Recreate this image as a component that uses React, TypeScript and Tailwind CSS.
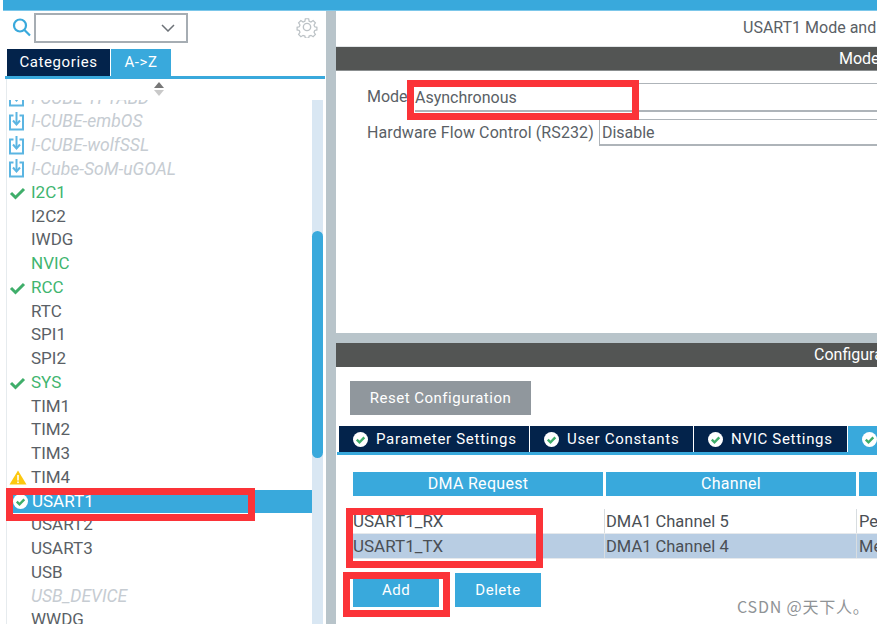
import React from "react";

const DL = () => (
  <svg width="18" height="21" viewBox="0 0 18 21" fill="none" stroke="#5bb5e2" strokeWidth="2" className="ml-[1px] shrink-0">
    <path d="M5.5 4.5H2v14h13v-14h-3.500" />
    <path d="M8.500 1v11" />
    <path d="M5 9.500l3.500 4 3.500-4" />
  </svg>
);
const Check = () => (
  <svg width="17" height="14" viewBox="0 0 17 14" fill="none" stroke="#3fae6a" strokeWidth="3" className="ml-[2px] shrink-0">
    <path d="M2 7l4.500 4.500L15 3" />
  </svg>
);
const Warn = () => (
  <svg width="18" height="15" viewBox="0 0 18 15" className="ml-[2px] shrink-0">
    <path d="M9 0.500L17.500 14.500H0.500Z" fill="#fcc80f" />
    <rect x="8.200" y="5" width="1.600" height="5.500" fill="#fff" />
    <rect x="8.200" y="11.500" width="1.600" height="1.600" fill="#fff" />
  </svg>
);
const OkBadge = () => (
  <svg width="15" height="15" viewBox="0 0 15 15" className="shrink-0">
    <circle cx="7.500" cy="7.500" r="7.500" fill="#fff" />
    <path d="M3.800 7.600l2.700 2.700 4.800-5" fill="none" stroke="#3fae6a" strokeWidth="2.400" />
  </svg>
);
const Gear = () => (
  <svg width="22" height="22" viewBox="0 0 24 24" fill="none" stroke="#bcc2c6" strokeWidth="1.500">
    <path d="M10 2h4l.6 3 2.200.9 2.600-1.700 2.800 2.800-1.700 2.600.9 2.200 2.600.6v3.200l-2.600.6-.9 2.200 1.700 2.600-2.800 2.800-2.600-1.700-2.200.9-.6 2.600h-4l-.6-2.600-2.200-.9-2.600 1.700-2.800-2.800 1.700-2.600-.9-2.200-2.600-.6v-3.200l2.600-.6.900-2.200-1.700-2.600 2.800-2.800 2.600 1.700 2.200-.9z" transform="translate(1.200 1.200) scale(0.9)" />
    <circle cx="12" cy="12" r="4" />
  </svg>
);

type Row = { t: string; k: "dl" | "ok" | "plain" | "green" | "warn" | "dis" | "sel" };
const rows: Row[] = [
  { t: "I-CUBE-TFTABD", k: "dl" },
  { t: "I-CUBE-embOS", k: "dl" },
  { t: "I-CUBE-wolfSSL", k: "dl" },
  { t: "I-Cube-SoM-uGOAL", k: "dl" },
  { t: "I2C1", k: "ok" },
  { t: "I2C2", k: "plain" },
  { t: "IWDG", k: "plain" },
  { t: "NVIC", k: "green" },
  { t: "RCC", k: "ok" },
  { t: "RTC", k: "plain" },
  { t: "SPI1", k: "plain" },
  { t: "SPI2", k: "plain" },
  { t: "SYS", k: "ok" },
  { t: "TIM1", k: "plain" },
  { t: "TIM2", k: "plain" },
  { t: "TIM3", k: "plain" },
  { t: "TIM4", k: "warn" },
  { t: "USART1", k: "sel" },
  { t: "USART2", k: "plain" },
  { t: "USART3", k: "plain" },
  { t: "USB", k: "plain" },
  { t: "USB_DEVICE", k: "dis" },
  { t: "WWDG", k: "plain" },
];

function ListRow({ r }: { r: Row }) {
  const italic = r.k === "dl" || r.k === "dis";
  const color =
    r.k === "sel" ? "text-white bg-[#39a9dc]" :
    r.k === "ok" || r.k === "green" ? "text-[#3fb56f]" :
    italic ? "text-[#c6ccd2] italic" : "text-[#5a5f66]";
  return (
    <div className={`h-[23.75px] shrink-0 flex items-center relative whitespace-nowrap ${italic ? "text-[17.5px]" : "text-[17px]"} ${color}`}>
      <div className="w-[24px] shrink-0 flex items-center">
        {r.k === "dl" && <DL />}
        {r.k === "ok" && <Check />}
        {r.k === "warn" && <Warn />}
        {r.k === "sel" && <span className="ml-[6px]"><OkBadge /></span>}
      </div>
      <span className={r.k === "sel" ? "ml-px" : ""}>{r.t}</span>
    </div>
  );
}

function Tab({ label, w }: { label: string; w: string }) {
  return (
    <div className={`${w} h-[26px] bg-[#03234b] text-white text-[15px] tracking-[0.7px] flex items-center pl-[14px] gap-[8px] shrink-0`}>
      <OkBadge />
      <span>{label}</span>
    </div>
  );
}

function RedBox({ cls }: { cls: string }) {
  return <div className={`absolute border-[7px] border-[#fb3338] ${cls}`} />;
}

export default function App() {
  return (
    <div className="relative w-[877px] h-[624px] overflow-hidden bg-white flex flex-col font-['Roboto',sans-serif] text-[#5a5f66]">
      <div className="h-[11px] shrink-0 ml-[3px] bg-[#39a9dc] border-b border-[#7cc7ea]" />
      <div className="flex-1 flex min-h-0">
        {/* left */}
        <div className="w-[326px] shrink-0 flex flex-col pl-[5px]">
          <div className="h-[38px] shrink-0 flex items-start pt-[2px]">
            <svg width="20" height="22" viewBox="0 0 20 22" fill="none" stroke="#39a9dc" strokeWidth="2.200" className="ml-[7px] mt-[4px] shrink-0">
              <circle cx="8" cy="8.500" r="6" />
              <path d="M12.500 13l5.500 5.500" />
            </svg>
            <div className="ml-[2px] w-[154px] h-[30px] border-2 border-[#a6adb3] flex items-center justify-end pr-[11px]">
              <svg width="14" height="8" viewBox="0 0 14 8" fill="none" stroke="#6d7278" strokeWidth="1.500"><path d="M1 1l6 6 6-6" /></svg>
            </div>
            <div className="ml-auto mr-[8px] mt-[3px]"><Gear /></div>
          </div>
          <div className="flex shrink-0 pl-[2px] h-[27px] gap-px">
            <div className="w-[103px] bg-[#03234b] text-white text-[15px] tracking-[0.6px] flex items-center justify-center">Categories</div>
            <div className="w-[60px] bg-[#39a9dc] text-white text-[15px] tracking-[0.6px] flex items-center justify-center">A-&gt;Z</div>
          </div>
          <div className="h-[3px] shrink-0 bg-[#39a9dc] mr-[1px]" />
          <div className="flex-1 min-h-0 relative border-l border-[#e6ebee] ml-[1px] mr-[3px] flex flex-col">
            <div className="h-[21px] shrink-0 relative">
              <svg width="12" height="14" viewBox="0 0 12 14" className="absolute left-[146px] top-[3px]">
                <path d="M6 0l5 6H1z" fill="#777" />
                <path d="M6 14l5-6H1z" fill="#c9c9c9" />
              </svg>
            </div>
            <div className="flex-1 min-h-0 flex">
              <div className="flex-1 min-w-0 flex flex-col overflow-hidden">
                <div className="-mt-[14.200px] flex flex-col">
                  {rows.map((r) => <ListRow key={r.t} r={r} />)}
                </div>
              </div>
              <div className="w-[11px] shrink-0 bg-[#d9e7f3] flex flex-col">
                <div className="h-[131px] shrink-0" />
                <div className="h-[227px] shrink-0 rounded-[6px] bg-[#39a9dc]" />
              </div>
            </div>
          </div>
        </div>
        {/* gutter */}
        <div className="w-[10px] shrink-0 bg-[#b8c4ca]" />
        {/* right */}
        <div className="flex-1 min-w-0 flex flex-col overflow-hidden">
          <div className="h-[36px] shrink-0 border-b border-[#e2e6e8] whitespace-nowrap text-[16px] pl-[407px] pt-[5px]">USART1 Mode and Configuration</div>
          <div className="h-[24px] shrink-0 bg-[#535554] border-b border-[#8b8f90] text-white text-[16px] whitespace-nowrap pl-[503px] flex items-center">Mode</div>
          <div className="h-[262px] shrink-0 flex flex-col pt-[12px] pl-[31px] text-[16px]">
            <div className="h-[29px] flex shrink-0">
              <span className="leading-[28px] w-[48px] shrink-0">Mode</span>
              <div className="w-[600px] shrink-0 border-t border-b-2 border-[#aeb4b9] leading-[27px]">Asynchronous</div>
            </div>
            <div className="h-[27px] mt-[7px] flex shrink-0">
              <span className="leading-[27px] whitespace-nowrap tracking-[0.1px]">Hardware Flow Control (RS232)</span>
              <div className="ml-[5px] w-[400px] shrink-0 border border-b-2 border-[#aeb4b9] leading-[25px] pl-[2px]">Disable</div>
            </div>
          </div>
          <div className="h-[10px] shrink-0 bg-[#b8c4ca]" />
          <div className="h-[24px] shrink-0 bg-[#535554] text-white text-[16px] whitespace-nowrap pl-[478px] flex items-center">Configuration</div>
          <div className="flex-1 min-h-0 flex flex-col">
            <div className="mt-[14px] ml-[14px] w-[181px] h-[34px] shrink-0 bg-[#90979d] text-white text-[15px] tracking-[0.5px] flex items-center justify-center">Reset Configuration</div>
            <div className="mt-[11px] ml-[3px] flex gap-px shrink-0 whitespace-nowrap">
              <Tab label="Parameter Settings" w="w-[190px]" />
              <Tab label="User Constants" w="w-[163px]" />
              <Tab label="NVIC Settings" w="w-[153px]" />
              <div className="w-[60px] h-[26px] bg-[#39a9dc] pl-[14px] flex items-center shrink-0"><OkBadge /></div>
            </div>
            <div className="ml-[1px] h-[3px] shrink-0 bg-[#39a9dc]" />
            <div className="mt-[17px] ml-[17px] flex gap-[3px] shrink-0 text-white text-[16px] whitespace-nowrap tracking-[0.3px]">
              <div className="w-[250px] shrink-0 h-[24px] bg-[#39a9dc] flex items-center justify-center">DMA Request</div>
              <div className="w-[250px] shrink-0 h-[24px] bg-[#39a9dc] flex items-center justify-center">Channel</div>
              <div className="w-[100px] shrink-0 h-[24px] bg-[#39a9dc]" />
            </div>
            <div className="mt-[13px] ml-[17px] flex h-[25px] shrink-0 leading-[25px] text-[#4a4f55] whitespace-nowrap border-b border-[#e6e9ec]">
              <div className="w-[251px] shrink-0 text-[17px]">USART1_RX</div>
              <div className="w-[252px] shrink-0 text-[16.500px] border-l border-[#d8dde0] pl-px">DMA1 Channel 5</div>
              <div className="shrink-0 text-[16.500px] border-l border-[#d8dde0] pl-[2px]">Peripheral To Memory</div>
            </div>
            <div className="ml-[17px] flex h-[25px] shrink-0 leading-[25px] bg-[#b8cde3] text-[#4a4f55] whitespace-nowrap border-b border-[#e6e9ec]">
              <div className="w-[251px] shrink-0 text-[17px]">USART1_TX</div>
              <div className="w-[252px] shrink-0 text-[16.500px] border-l border-[#d8dde0] pl-px">DMA1 Channel 4</div>
              <div className="shrink-0 text-[16.500px] border-l border-[#d8dde0] pl-[2px]">Memory To Peripheral</div>
            </div>
            <div className="mt-[14px] ml-[17px] flex gap-[16px] shrink-0 text-white text-[15px] tracking-[0.5px]">
              <div className="w-[86px] h-[34px] bg-[#39a9dc] flex items-center justify-center">Add</div>
              <div className="w-[86px] h-[34px] bg-[#39a9dc] flex items-center justify-center">Delete</div>
            </div>
          </div>
        </div>
      </div>

      {/* annotation overlays */}
      <RedBox cls="left-[6px] top-[488px] w-[249px] h-[33px]" />
      <RedBox cls="left-[407px] top-[80px] w-[232px] h-[40px]" />
      <RedBox cls="left-[346px] top-[508px] w-[197px] h-[60px]" />
      <RedBox cls="left-[343px] top-[572px] w-[107px] h-[45px]" />
      <div className="absolute left-[737px] top-[596px] text-[#8f9396] text-[16px] tracking-[0.8px] font-['Noto_Sans_CJK_SC',sans-serif] leading-[20px] whitespace-nowrap">CSDN @天下人。</div>
    </div>
  );
}
